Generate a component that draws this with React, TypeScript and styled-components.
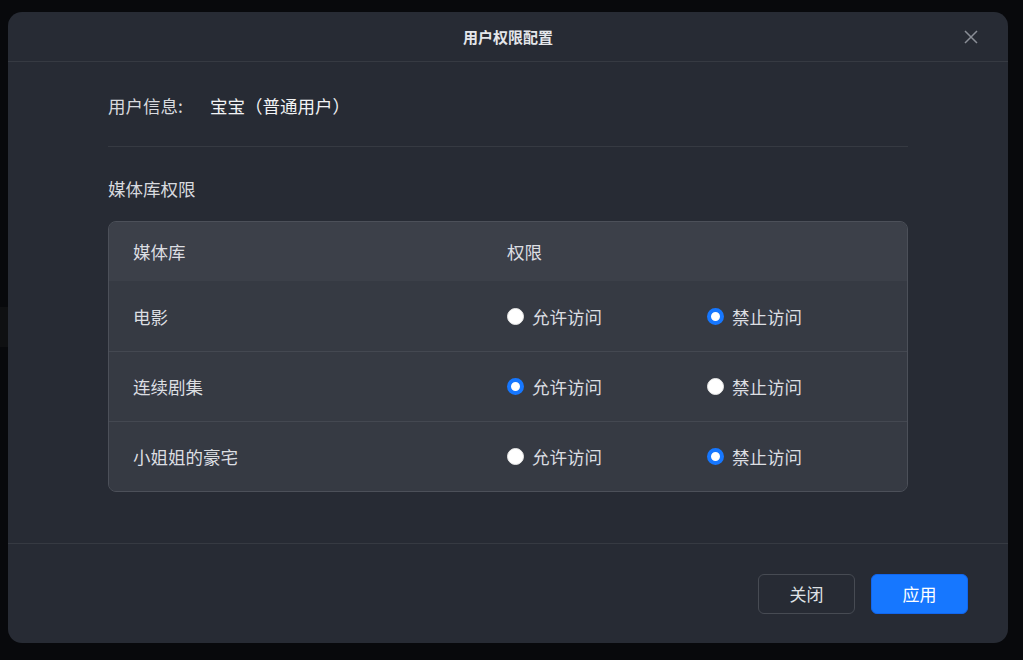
import React from "react";
import styled, { createGlobalStyle } from "styled-components";

const GlobalStyle = createGlobalStyle`
  html, body {
    margin: 0;
    padding: 0;
    background: #08090c;
    font-family: "Noto Sans CJK SC", "Noto Sans", sans-serif;
  }
`;

const Backdrop = styled.div`
  position: relative;
  width: 1023px;
  height: 660px;
  padding: 12px 15px 17px 8px;
  box-sizing: border-box;
  background: #08090c;
`;

const Shade = styled.div`
  position: absolute;
  left: 0;
  top: 307px;
  width: 8px;
  height: 40px;
  background: #0f1012;
`;

const Modal = styled.div`
  position: relative;
  width: 1000px;
  height: 631px;
  background: #272b34;
  border-radius: 14px;
  display: flex;
  flex-direction: column;
  overflow: hidden;
`;

const Header = styled.div`
  height: 50px;
  box-sizing: border-box;
  border-bottom: 1px solid #363a42;
  display: flex;
  align-items: center;
  justify-content: center;
  position: relative;
`;

const Title = styled.div`
  font-size: 15px;
  font-weight: 700;
  color: #e4e6ea;
`;

const CloseIcon = styled.button`
  position: absolute;
  right: 29px;
  top: 17px;
  width: 16px;
  height: 16px;
  padding: 0;
  border: none;
  background: none;
  cursor: pointer;
`;

const Body = styled.div`
  flex: 1;
  padding: 28px 100px 0 100px;
  display: flex;
  flex-direction: column;
`;

const InfoRow = styled.div`
  display: flex;
  align-items: center;
  height: 30px;
  font-size: 17.5px;
  padding-bottom: 26px;
  border-bottom: 1px solid #363a42;
`;

const InfoLabel = styled.span`
  color: #d8dadf;
  width: 102px;
`;

const InfoValue = styled.span`
  color: #f2f3f5;
`;

const SectionTitle = styled.div`
  margin-top: 30px;
  font-size: 17.5px;
  color: #d8dadf;
  line-height: 24px;
`;

const Table = styled.div`
  margin-top: 20px;
  border: 1px solid #4c5059;
  border-radius: 8px;
  overflow: hidden;
  background: #363a43;
`;

const Row = styled.div<{ $head?: boolean }>`
  display: grid;
  grid-template-columns: 374px 200px 1fr;
  align-items: center;
  box-sizing: border-box;
  height: ${(p) => (p.$head ? "59px" : "70px")};
  padding-left: 24px;
  font-size: 17.5px;
  color: #dcdee2;
  background: ${(p) => (p.$head ? "#3c4049" : "#363a43")};
  & + & {
    border-top: 1px solid #444851;
  }
  &:nth-child(2) {
    border-top: none;
  }
`;

const RadioLabel = styled.label`
  display: flex;
  align-items: center;
  gap: 8px;
  cursor: pointer;
`;

const RadioDot = styled.span<{ $on: boolean }>`
  width: 17px;
  height: 17px;
  border-radius: 50%;
  box-sizing: border-box;
  background: #ffffff;
  border: ${(p) => (p.$on ? "4.5px solid #1677ff" : "1px solid #e6e6e6")};
`;

const Footer = styled.div`
  height: 100px;
  box-sizing: border-box;
  border-top: 1px solid #363a42;
  display: flex;
  justify-content: flex-end;
  align-items: center;
  gap: 16px;
  padding: 0 40px 0 0;
`;

const Button = styled.button<{ $primary?: boolean }>`
  width: 97px;
  height: 40px;
  border-radius: 6px;
  font-family: "Noto Sans CJK SC", sans-serif;
  font-size: 17px;
  cursor: pointer;
  color: ${(p) => (p.$primary ? "#ffffff" : "#dfe1e5")};
  background: ${(p) => (p.$primary ? "#1677ff" : "transparent")};
  border: 1px solid ${(p) => (p.$primary ? "#1166ee" : "#474b53")};
`;

type Lib = { name: string; allow: boolean };

const libs: Lib[] = [
  { name: "电影", allow: false },
  { name: "连续剧集", allow: true },
  { name: "小姐姐的豪宅", allow: false },
];

const Radio = ({ on, text }: { on: boolean; text: string }) => (
  <RadioLabel>
    <RadioDot $on={on} />
    <span>{text}</span>
  </RadioLabel>
);

export default function App() {
  return (
    <>
      <GlobalStyle />
      <Backdrop>
        <Shade />
        <Modal>
          <Header>
            <Title>用户权限配置</Title>
            <CloseIcon aria-label="close">
              <svg width="16" height="16" viewBox="0 0 16 16">
                <path d="M2 2 L14 14 M14 2 L2 14" stroke="#8a8e96" strokeWidth="1.5" />
              </svg>
            </CloseIcon>
          </Header>
          <Body>
            <InfoRow>
              <InfoLabel>用户信息:</InfoLabel>
              <InfoValue>宝宝（普通用户）</InfoValue>
            </InfoRow>
            <SectionTitle>媒体库权限</SectionTitle>
            <Table>
              <Row $head>
                <span>媒体库</span>
                <span>权限</span>
                <span />
              </Row>
              {libs.map((l) => (
                <Row key={l.name}>
                  <span>{l.name}</span>
                  <Radio on={l.allow} text="允许访问" />
                  <Radio on={!l.allow} text="禁止访问" />
                </Row>
              ))}
            </Table>
          </Body>
          <Footer>
            <Button>关闭</Button>
            <Button $primary>应用</Button>
          </Footer>
        </Modal>
      </Backdrop>
    </>
  );
}
